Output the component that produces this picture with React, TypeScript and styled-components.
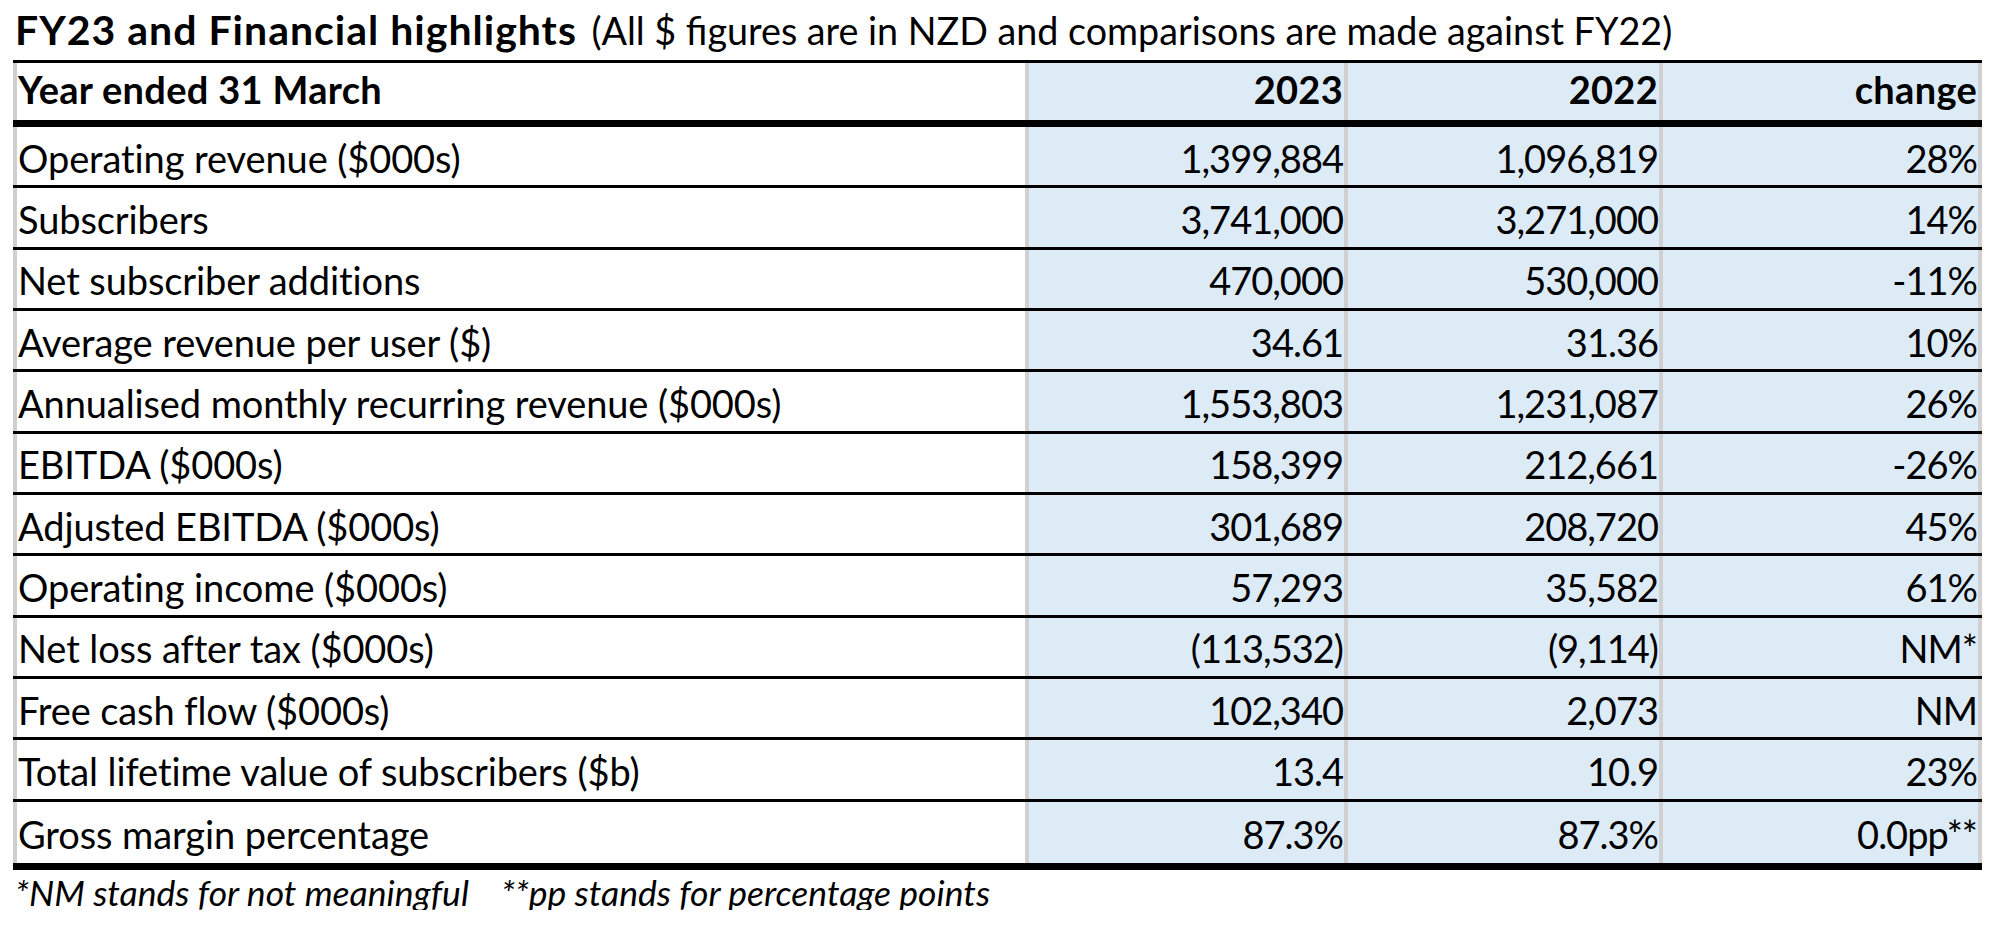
import React from 'react'
import styled, { createGlobalStyle } from 'styled-components'

const GlobalStyle = createGlobalStyle`
  html, body {
    margin: 0;
    padding: 0;
    background: #ffffff;
  }
  body {
    font-family: 'Lato', 'Liberation Sans', sans-serif;
    color: #000000;
  }
`

const FONT_SIZE = 38
const BLUE = '#ddebf7'
const GRID = '#d0d0d0'

const Page = styled.div`
  padding-left: 13px;
  width: 1969px;
`

const Title = styled.div`
  height: 60px;
  display: flex;
  align-items: flex-end;
  padding-left: 2px;
  font-size: 41px;
  line-height: 1;
  box-sizing: border-box;
`

const TitleInner = styled.div`
  padding-bottom: 10px;
  white-space: nowrap;
`

const TitleStrong = styled.span`
  font-weight: 700;
  letter-spacing: 1px;
`

const TitleNote = styled.span`
  margin-left: 4px;
  font-weight: 400;
  font-size: 37.7px;
`

const Table = styled.div`
  border-top: 3px solid #000;
  border-bottom: 7px solid #000;
`

const Row = styled.div<{ $head?: boolean; $last?: boolean }>`
  display: grid;
  grid-template-columns: 1012px 319px 315px 323px;
  box-sizing: border-box;
  height: ${({ $head }) => ($head ? '64px' : '61.33px')};
  border-bottom: ${({ $head, $last }) => ($head ? '7px solid #000' : $last ? 'none' : '3px solid #000')};
  font-weight: ${({ $head }) => ($head ? 700 : 400)};
  letter-spacing: ${({ $head }) => ($head ? '0.3px' : '-0.1px')};
`

const Cell = styled.div<{ $num?: boolean; $end?: boolean; $head?: boolean }>`
  display: flex;
  align-items: center;
  justify-content: ${({ $num }) => ($num ? 'flex-end' : 'flex-start')};
  border-left: 4px solid ${GRID};
  border-right: ${({ $end }) => ($end ? `4px solid ${GRID}` : 'none')};
  background: ${({ $num }) => ($num ? BLUE : '#ffffff')};
  padding: ${({ $head }) => ($head ? '0 1px 6px 1px' : '3px 1px 0 1px')};
  font-size: ${FONT_SIZE}px;
  line-height: 1;
  white-space: nowrap;
  letter-spacing: ${({ $num, $head }) => ($num && !$head ? '-1px' : 'inherit')};
`

const Footnote = styled.div`
  padding: 5px 0 0 2px;
  font-size: 35.5px;
  line-height: 1;
  font-style: italic;
  white-space: nowrap;
`

const NoteGap = styled.span`
  display: inline-block;
  width: 32px;
`

const rows = [
  ['Operating revenue ($000s)', '1,399,884', '1,096,819', '28%'],
  ['Subscribers', '3,741,000', '3,271,000', '14%'],
  ['Net subscriber additions', '470,000', '530,000', '-11%'],
  ['Average revenue per user ($)', '34.61', '31.36', '10%'],
  ['Annualised monthly recurring revenue ($000s)', '1,553,803', '1,231,087', '26%'],
  ['EBITDA ($000s)', '158,399', '212,661', '-26%'],
  ['Adjusted EBITDA ($000s)', '301,689', '208,720', '45%'],
  ['Operating income ($000s)', '57,293', '35,582', '61%'],
  ['Net loss after tax ($000s)', '(113,532)', '(9,114)', 'NM*'],
  ['Free cash flow ($000s)', '102,340', '2,073', 'NM'],
  ['Total lifetime value of subscribers ($b)', '13.4', '10.9', '23%'],
  ['Gross margin percentage', '87.3%', '87.3%', '0.0pp**'],
]

const App = () => {
  return (
    <Page>
      <GlobalStyle />
      <Title>
        <TitleInner>
          <TitleStrong>FY23 and Financial highlights</TitleStrong>{' '}
          <TitleNote>(All $ figures are in NZD and comparisons are made against FY22)</TitleNote>
        </TitleInner>
      </Title>
      <Table>
        <Row $head>
          <Cell $head>Year ended 31 March</Cell>
          <Cell $head $num>2023</Cell>
          <Cell $head $num>2022</Cell>
          <Cell $head $num $end>change</Cell>
        </Row>
        {rows.map((r, i) => (
          <Row key={r[0]} $last={i === rows.length - 1}>
            <Cell>{r[0]}</Cell>
            <Cell $num>{r[1]}</Cell>
            <Cell $num>{r[2]}</Cell>
            <Cell $num $end>{r[3]}</Cell>
          </Row>
        ))}
      </Table>
      <Footnote>
        *NM stands for not meaningful
        <NoteGap />
        **pp stands for percentage points
      </Footnote>
    </Page>
  )
}

export default App
